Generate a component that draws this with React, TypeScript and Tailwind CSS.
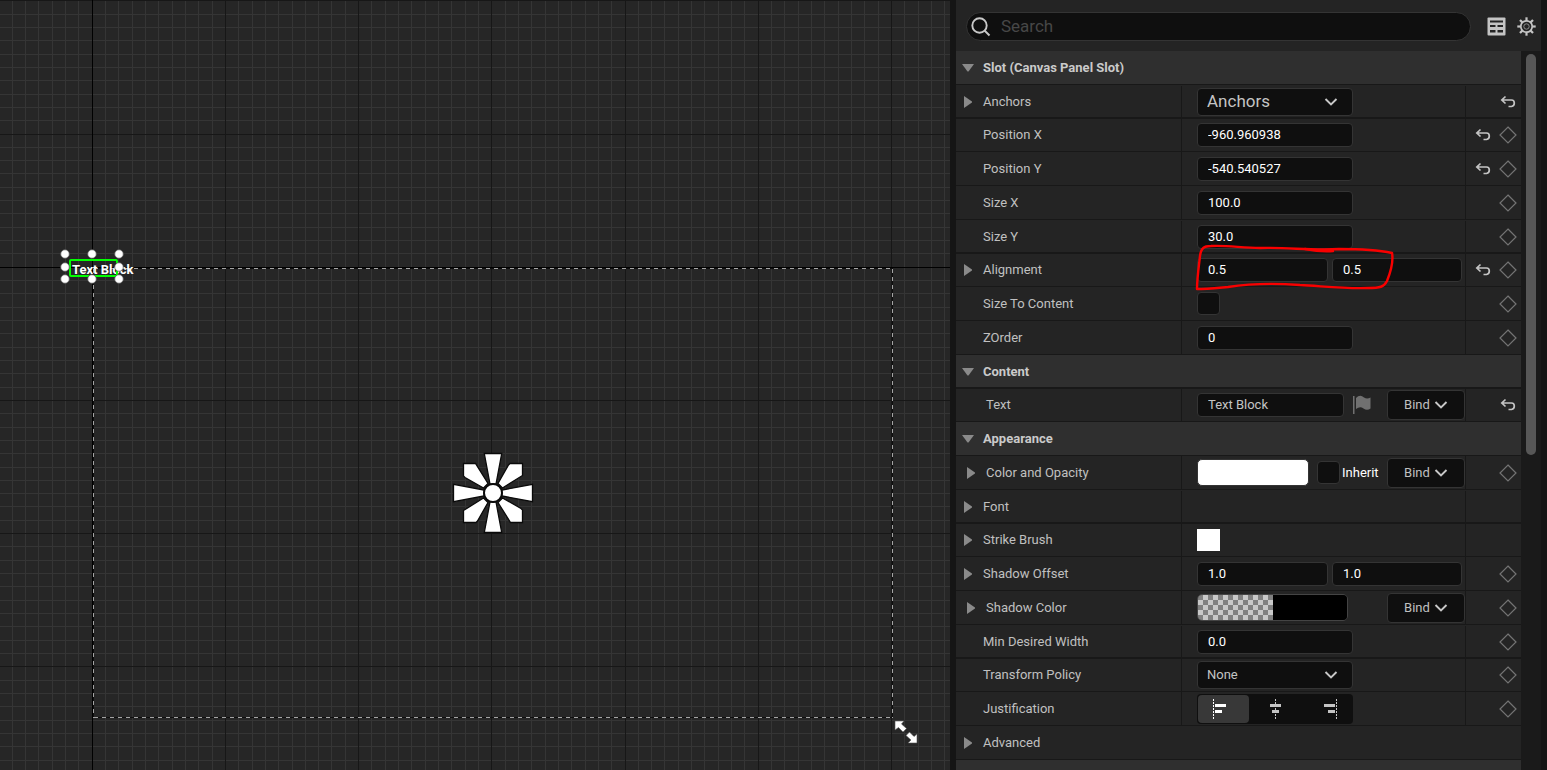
import { ReactNode, useId, useState } from "react";

const STEP = 13.32;
const ORIGIN_X = 92.2;
const ORIGIN_Y = 267.2;

function gridLines(origin: number, from: number, to: number) {
  const minor: number[] = [];
  const major: number[] = [];
  for (let k = from; k <= to; k++) {
    const pos = Math.floor(origin + k * STEP);
    if (k === 0) continue;
    (k % 10 === 0 ? major : minor).push(pos);
  }
  return { minor, major };
}

const cols = gridLines(ORIGIN_X, -7, 180);
const rows = gridLines(ORIGIN_Y, -21, 120);
const vertical = (xs: number[]) => xs.map((x) => `M${x}.5 0V2000`).join("");
const horizontal = (ys: number[]) => ys.map((y) => `M0 ${y}.5H2600`).join("");

const HANDLES = [
  [65, 254], [92, 254], [119, 254],
  [65, 267], [119, 267],
  [65, 279], [92, 279], [119, 279],
];

function DesignerCanvas() {
  return (
    <main className="relative min-w-0 flex-1 overflow-hidden bg-[#262626]" aria-label="Designer">
      <svg className="absolute inset-0 size-full" fill="none" aria-hidden="true">
        <g shapeRendering="crispEdges">
          <path d={vertical(cols.minor) + horizontal(rows.minor)} stroke="#353535" />
          <path d={vertical(cols.major) + horizontal(rows.major)} stroke="#171717" />
          <path d="M92.5 0V2000M0 267.5H2600" stroke="#000" />
          <path d="M93.5 268.5H892.5V717.5H93.5Z" stroke="#0e0e0e" />
          <path d="M93.5 268.5H892.5M892.5 268.5V717.5M93.5 717.5H892.5M93.5 268.5V717.5" stroke="#a4a4a4" strokeDasharray="4 4" />
        </g>
        <g transform="translate(493 493)" fill="#fff" stroke="#0a0a0a" strokeWidth="1.3">
          {[0, 90, 180, 270].map((a) => (
            <g key={a} transform={`rotate(${a})`}>
              <path d="M-8.700 -39.500H8.700L3 -9H-3Z" />
              <path d="M29.500 -29.500V-17.500L9.500 -5L5 -9.500L15.500 -28L17 -29.500Z" />
            </g>
          ))}
          <circle r="9" strokeWidth="2" />
        </g>
        <g transform="translate(906 732)" fill="#fff" stroke="#555" strokeWidth="0.6">
          <path d="M-11 -11H-2L-4.500 -8L0.500 -3.500L-3 0L-7.500 -4.500L-11 -2Z" />
          <path d="M11 11H2L5 8L0 3.500L3.500 0L8 4.500L11 2Z" />
        </g>
      </svg>
      <span className="absolute top-[261px] left-[72px] font-bold whitespace-nowrap text-white text-[13px] leading-[18px]">
        Text Block
      </span>
      <svg className="absolute inset-0 size-full" fill="none" aria-hidden="true">
        <rect x="70" y="260" width="47" height="16" stroke="#00ff00" strokeWidth="2" rx="1" />
        {HANDLES.map(([x, y]) => (
          <circle key={`${x}-${y}`} cx={x} cy={y} r="4.3" fill="#fff" stroke="#555" strokeWidth="0.8" />
        ))}
      </svg>
    </main>
  );
}

function Arrow({ open = false }: { open?: boolean }) {
  return open ? (
    <svg width="14" height="14" viewBox="0 0 14 14" fill="#8a8a8a"><path d="M1 3H13L7.500 10.500H6.500Z" /></svg>
  ) : (
    <svg width="14" height="14" viewBox="0 0 14 14" fill="#8a8a8a"><path d="M3 1L11 6.500V7.500L3 13Z" /></svg>
  );
}

function Chevron() {
  return (
    <svg width="14" height="14" viewBox="0 0 14 14" fill="none" stroke="#c8c8c8" strokeWidth="1.900">
      <path d="M1.500 4L7 9.500L12.500 4" />
    </svg>
  );
}

function ResetIcon() {
  return (
    <button type="button" aria-label="Reset to default" className="flex size-[18px] items-center justify-center">
      <svg width="16" height="16" viewBox="0 0 16 16" fill="none" stroke="#c4c4c4" strokeWidth="1.700">
        <path d="M5.500 2.500L1.800 6L5.500 9.500M2 6H11.500Q14.300 6 14.300 9T11.500 12.500H8.500" />
      </svg>
    </button>
  );
}

function KeyIcon() {
  return (
    <button type="button" aria-label="Add keyframe" className="flex size-[18px] items-center justify-center">
      <svg width="18" height="18" viewBox="0 0 18 18" fill="none" stroke="#747474" strokeWidth="1.200">
        <path d="M9 1L17 9L9 17L1 9Z" />
      </svg>
    </button>
  );
}

const rowBase = "flex h-[34px] shrink-0 border-b border-[#181818] [&:nth-child(4n+3)]:h-[33px] [&:nth-child(4n+2)]:border-b-2 [&:nth-child(4n+2)]:pt-px";
const boxStyle = "rounded-[4px] border border-[#343434] bg-[#0f0f0f]";

function Header({ children }: { children: ReactNode }) {
  return (
    <div className={`${rowBase} items-center bg-[#2f2f2f] pl-[5px]`}>
      <button type="button" aria-expanded="true" className="flex items-center gap-2 font-bold text-[#cacaca]">
        <Arrow open />
        <h2>{children}</h2>
      </button>
    </div>
  );
}

type RowProps = {
  label: string;
  htmlFor?: string;
  arrow?: boolean;
  indent?: boolean;
  reset?: boolean;
  keyable?: boolean;
  children?: ReactNode;
};

function Row({ label, htmlFor, arrow, indent, reset, keyable, children }: RowProps) {
  return (
    <div className={`${rowBase} bg-[#242424]`}>
      <div className={`flex w-[226px] shrink-0 items-center gap-2 border-r border-[#181818] ${indent ? "pl-2" : "pl-[5px]"}`}>
        {arrow ? (
          <button type="button" aria-label={`Expand ${label}`}><Arrow /></button>
        ) : (
          <span className="w-[14px]" />
        )}
        <label htmlFor={htmlFor}>{label}</label>
      </div>
      <div className="flex min-w-0 flex-1 items-center pl-[15px]">{children}</div>
      <div className="flex w-[56px] shrink-0 items-center justify-end gap-[7px] border-l border-[#181818] pr-1">
        {reset && <ResetIcon />}
        {keyable && <KeyIcon />}
      </div>
    </div>
  );
}

function TextField({ id, value, label, width = "w-[156px]", tone = "text-white" }: { id?: string; value: string; label?: string; width?: string; tone?: string }) {
  return (
    <input id={id} aria-label={label} defaultValue={value} className={`${boxStyle} ${width} ${tone} h-6 px-[10px] pb-px outline-none`} />
  );
}

function FieldRow({ label, value, reset }: { label: string; value: string; reset?: boolean }) {
  const id = useId();
  return (
    <Row label={label} htmlFor={id} reset={reset} keyable>
      <TextField id={id} value={value} />
    </Row>
  );
}

function PairRow({ label, values, reset, children }: { label: string; values: [string, string]; reset?: boolean; children?: ReactNode }) {
  const id = useId();
  return (
    <Row label={label} htmlFor={id} arrow reset={reset} keyable>
      <div className="relative flex gap-1">
        <TextField id={id} value={values[0]} width="w-[131px]" />
        <TextField label={`${label} Y`} value={values[1]} width="w-[130px]" />
        {children}
      </div>
    </Row>
  );
}

function SelectBox({ id, value, size = "text-[13px]" }: { id: string; value: string; size?: string }) {
  return (
    <div className="grid w-[156px] items-center">
      <select id={id} className={`${boxStyle} ${size} col-start-1 row-start-1 h-7 appearance-none px-[9px] pb-px text-[#c4c4c4] outline-none`}>
        <option>{value}</option>
      </select>
      <span className="pointer-events-none col-start-1 row-start-1 mr-[15px] justify-self-end"><Chevron /></span>
    </div>
  );
}

function BindButton() {
  return (
    <button type="button" className={`${boxStyle} ml-auto flex h-[30px] w-[78px] items-center justify-center gap-1`}>
      Bind
      <Chevron />
    </button>
  );
}

const checkBox = "size-[23px] shrink-0 appearance-none rounded-[4px] border border-[#343434] bg-[#0f0f0f] checked:bg-[#0070e0]";

const ALIGN = [
  { name: "Left", axis: 0.5, bars: "M2 5h11v3H2zM2 11h7v3H2z" },
  { name: "Center", axis: 11.5, bars: "M6 5h11v3H6zM8 11h7v3H8z" },
  { name: "Right", axis: 20.5, bars: "M8 5h11v3H8zM12 11h7v3H12z" },
];

function Justification() {
  const [active, setActive] = useState("Left");
  return (
    <div role="group" aria-label="Justification" className="flex h-[30px] w-[156px] rounded-[4px] bg-[#0f0f0f] p-px">
      {ALIGN.map(({ name, axis, bars }) => (
        <button
          key={name}
          type="button"
          aria-label={name}
          aria-pressed={active === name}
          onClick={() => setActive(name)}
          className={`flex flex-1 items-center justify-center rounded-[4px] ${active === name ? "bg-[#383838] text-white" : "text-[#c4c4c4]"}`}
        >
          <svg width="21" height="20" viewBox="0 0 21 20" fill="currentColor" shapeRendering="crispEdges">
            <path d={`M${axis} 0V20`} stroke="currentColor" strokeDasharray="2 1" />
            <path d={bars} />
          </svg>
        </button>
      ))}
    </div>
  );
}

function RedOutline() {
  return (
    <svg className="pointer-events-none absolute -top-[14px] -left-[3px]" width="202" height="48" viewBox="0 0 202 48" fill="none" stroke="#fa0000" strokeWidth="2.400" strokeLinecap="round" strokeLinejoin="round">
      <path d="M3 45C3 35 5 21 6 12C7 4 10 2 17 2C33 1 48 4 66 4C93 3 119 7 145 5C165 5 184 6 198 9C200 20 195 32 193 37C190 43 186 44 174 44C152 45 127 42 106 41C80 39 53 40 34 43C22 44 12 45 3 45Z" />
      <path d="M111 5Q127 8 139 7" />
    </svg>
  );
}

function DetailsPanel() {
  return (
    <aside className="flex w-[597px] shrink-0 flex-col border-l-[6px] border-r-[6px] border-[#151515] bg-[#242424]" aria-label="Details">
      <div className="flex h-[51px] shrink-0 items-center gap-[10px] pt-[2px] pr-[5px] pl-[10px]">
        <label className="flex h-[29px] min-w-0 flex-1 items-center gap-[10px] rounded-full border border-[#343434] bg-[#0f0f0f] pl-1">
          <svg className="shrink-0" width="20" height="20" viewBox="0 0 20 20" fill="none" stroke="#c8c8c8" strokeWidth="1.900">
            <circle cx="8.500" cy="8.500" r="7.200" />
            <path d="M13.500 13.500L18.500 18.500" />
          </svg>
          <input aria-label="Search" placeholder="Search" className="min-w-0 flex-1 bg-transparent pb-[2px] text-[17px] text-[#c8c8c8] outline-none placeholder:text-[#474747]" />
        </label>
        <div className="flex items-center gap-[11px] pl-[6px]">
          <button type="button" aria-label="Property matrix">
            <svg width="19" height="19" viewBox="0 0 19 19">
              <rect x="0.500" y="0.500" width="18" height="18" rx="1" fill="#c4c4c4" />
              <path d="M3 3.500H16V5.500H3ZM3 8H8.500V10H3ZM10.500 8H16V10H10.500ZM3 13H8.500V15.500H3ZM10.500 13H16V15.500H10.500Z" fill="#242424" />
            </svg>
          </button>
          <button type="button" aria-label="Settings">
            <svg width="19" height="19" viewBox="0 0 19 19" fill="none" stroke="#c4c4c4">
              <circle cx="9.500" cy="9.500" r="5.700" strokeWidth="1.700" />
              <circle cx="9.500" cy="9.500" r="2.700" strokeWidth="1" stroke="#8a8a8a" />
              {[0, 45, 90, 135, 180, 225, 270, 315].map((a) => (
                <path key={a} d="M9.500 0.300V4" strokeWidth="2.200" transform={`rotate(${a} 9.500 9.500)`} />
              ))}
            </svg>
          </button>
        </div>
      </div>
      <div className="flex min-h-0 flex-1">
        <form className="flex min-w-0 flex-1 flex-col overflow-hidden" onSubmit={(e) => e.preventDefault()}>
          <Header>Slot (Canvas Panel Slot)</Header>
          <Row label="Anchors" htmlFor="anchors" arrow reset>
            <SelectBox id="anchors" value="Anchors" size="text-[17px]" />
          </Row>
          <FieldRow label="Position X" value="-960.960938" reset />
          <FieldRow label="Position Y" value="-540.540527" reset />
          <FieldRow label="Size X" value="100.0" />
          <FieldRow label="Size Y" value="30.0" />
          <PairRow label="Alignment" values={["0.5", "0.5"]} reset>
            <RedOutline />
          </PairRow>
          <Row label="Size To Content" htmlFor="size-to-content" keyable>
            <input id="size-to-content" type="checkbox" className={checkBox} />
          </Row>
          <FieldRow label="ZOrder" value="0" />
          <Header>Content</Header>
          <Row label="Text" htmlFor="text" indent reset>
            <TextField id="text" value="Text Block" width="w-[147px]" tone="text-[#c4c4c4]" />
            <svg className="ml-[9px]" width="18" height="20" viewBox="0 0 18 20" fill="#707070">
              <path d="M0 1H1.500V19H0ZM3 3Q7 -1 11 2.500Q14 4.500 17.500 2.500V13.500Q14 16 10.500 13.500Q7 11 3 14Z" />
            </svg>
            <BindButton />
          </Row>
          <Header>Appearance</Header>
          <Row label="Color and Opacity" htmlFor="color" arrow indent keyable>
            <button id="color" type="button" aria-label="Color and Opacity" className="h-[27px] w-[112px] rounded-[5px] border border-[#343434] bg-white" />
            <label className="ml-2 flex items-center gap-[2px] text-white">
              <input type="checkbox" className={checkBox} />
              Inherit
            </label>
            <BindButton />
          </Row>
          <Row label="Font" arrow />
          <Row label="Strike Brush" arrow>
            <button type="button" aria-label="Strike Brush" className="h-[22px] w-[23px] bg-white" />
          </Row>
          <PairRow label="Shadow Offset" values={["1.0", "1.0"]} />
          <Row label="Shadow Color" htmlFor="shadow-color" arrow indent keyable>
            <button id="shadow-color" type="button" aria-label="Shadow Color" className="flex h-[27px] w-[151px] overflow-hidden rounded-[5px] border border-[#444444]">
              <span className="h-full flex-1 bg-[repeating-conic-gradient(#c8c8c8_0%_25%,#808080_0%_50%)] bg-[length:10px_10px]" />
              <span className="h-full flex-1 bg-black" />
            </button>
            <BindButton />
          </Row>
          <FieldRow label="Min Desired Width" value="0.0" />
          <Row label="Transform Policy" htmlFor="transform-policy" keyable>
            <SelectBox id="transform-policy" value="None" />
          </Row>
          <Row label="Justification" keyable>
            <Justification />
          </Row>
          <div className={`${rowBase} items-center bg-[#242424] pl-[5px]`}>
            <button type="button" aria-expanded="false" className="flex items-center gap-2">
              <Arrow />
              Advanced
            </button>
          </div>
          <div className="flex-1 bg-[#2f2f2f]" />
        </form>
        <div className="w-5 shrink-0 bg-[#1a1a1a] px-[5px] pt-[3px]">
          <div className="h-[401px] rounded-full bg-[#575757]" />
        </div>
      </div>
    </aside>
  );
}

export default function App() {
  return (
    <div className="flex h-screen min-h-[770px] overflow-hidden bg-[#151515] font-[Roboto,sans-serif] text-[13px] leading-[18px] text-[#c0c0c0]">
      <DesignerCanvas />
      <DetailsPanel />
    </div>
  );
}
